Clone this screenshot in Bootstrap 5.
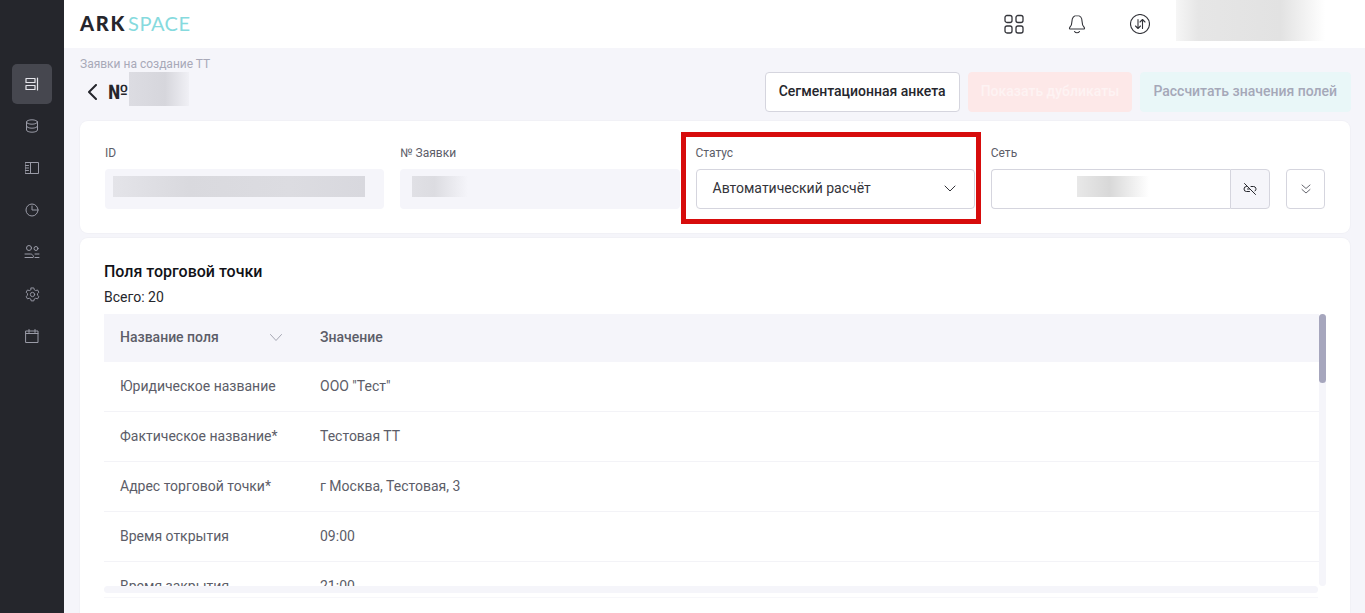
<!doctype html>
<html lang="ru">
<head>
<meta charset="utf-8">
<title>Заявки на создание ТТ</title>
<link rel="stylesheet" href="https://cdn.jsdelivr.net/npm/bootstrap@5.3.0/dist/css/bootstrap.min.css">
<style>
html,body{height:613px;overflow:hidden}
body{font-family:Roboto,"Liberation Sans",sans-serif;background:#f5f5fa;color:#25262c;font-size:14px}
svg{display:block;fill:none;stroke:currentColor;stroke-linecap:round;stroke-linejoin:round}
.app-rail{width:64px;background:#25262c;color:#9a9ba7;padding-top:64px;gap:2px;height:613px;flex:none}
.rail-item{width:40px;height:40px;border-radius:5px}
.rail-item.on{background:#46474f;color:#e6e6ec}
.app-top{height:48px;padding-left:16px;padding-right:40px;color:#33343a}
.logo-txt{font-family:Lato,sans-serif;font-size:20px;line-height:1;letter-spacing:1.7px;font-weight:900;color:#25262c;margin-top:-2px}
.logo-txt span{font-weight:400;color:#86dade;letter-spacing:.5px;margin-left:2px}
.top-ico{width:63px}
.blur-user{width:149px;height:41px;margin-top:-7px;margin-left:5px;overflow:hidden;background:linear-gradient(90deg,#f6f6f6,#e6e6e6 15%,#e2e2e2 70%,#fff)}
.crumb{font-size:12px;line-height:14px;color:#a8a9b8;padding-top:9px;margin-left:16px}
.title-row{padding-left:16px;padding-right:14px;height:50px;padding-top:1px}
.title-back{margin-top:12px}
.title-no{font-size:20px;font-weight:700;line-height:24px;margin-left:11px;margin-top:8px}
.title-mask{width:60px;height:34px;background:linear-gradient(90deg,#dcdce2,#d6d6dc 60%,#f0f0f5);margin-left:1px}
.act{height:40px;font-size:14px;font-weight:500;padding:0 13px;border-radius:4px;line-height:36px;white-space:nowrap}
.act-w{background:#fff;border:1px solid #d5d5de;color:#25262c}
.act-r{background:#fde8e8;color:#fdf3f3;border:1px solid #fde8e8;padding:0 12px}
.act-t{background:#e9f7f8;color:#a5a8b8;border:1px solid #e9f7f8;padding:0 13px 0 12px}
.panel{background:#fff;border-radius:8px;margin-left:16px;margin-right:15px;box-shadow:0 0 0 1px #f1f1f6}
.top-panel{height:112px;padding:24px 25px 0}
.f-grid{display:grid;grid-template-columns:repeat(4,1fr);gap:16px;flex:1}
.f-lab{font-size:12px;line-height:16px;color:#5c5d68;margin-bottom:8px}
.f-box{height:40px;border-radius:4px;position:relative;display:flow-root}
.f-ro{background:#f5f5fa}
.f-sel{border:1px solid #d5d5de;font-size:14px;padding:0 18px 2px 16px;color:#33343a;background:#fff}
.f-net{border:1px solid #d5d5de;background:#fff;height:40px;flex:1;border-radius:4px 0 0 4px;border-right:0;display:flow-root}
.f-unlink{width:40px;height:40px;background:#f5f5fa;border:1px solid #d5d5de;border-radius:0 4px 4px 0}
.f-more{width:39px;height:40px;border:1px solid #d5d5de;border-radius:4px;background:#fff;margin-left:16px;margin-top:24px;flex:none;color:#55565f}
.mask{height:21px;margin-top:7px}
.mask-a{margin-left:8px;margin-right:19px;background:linear-gradient(90deg,#e4e4e9,#d9d9de 30%,#dcdce1 70%,#d8d8de)}
.mask-b{margin-left:12px;width:56px;background:linear-gradient(90deg,#e0e0e5,#dcdce1 40%,#f5f5fa)}
.mask-c{margin-left:85px;width:72px;margin-top:6px;background:linear-gradient(90deg,#e8e8e8,#d8d8d8 45%,#fff)}
.hl-box{position:absolute;left:-16px;right:-7px;top:-38px;height:92px;border:5px solid #d70c0c;pointer-events:none}
.fields-panel{margin-top:5px;height:400px;padding:24px 24px 0}
.sec-title{font-size:16px;line-height:19px;font-weight:500;color:#111217}
.sec-count{font-size:14px;line-height:16px;margin-top:8px;margin-bottom:9px;color:#25262c}
.tbl-shell{width:1222px}
.tbl-view{height:272px;width:1215px;overflow:hidden;flex:none}
.track-v{width:7px;height:272px;background:#f5f5fa;border-radius:4px;flex:none}
.thumb-v{background:#a6a6bd;border-radius:4px}
.track-h{height:7px;width:1214px;background:#f5f5fa;border-radius:4px}
.tbl-foot{height:1px;width:1214px;margin-top:4px;background:#f7f7fa}
.tbl-head{height:48px;background:#f5f5fa;font-weight:500;color:#5c5d68;padding-bottom:2px}
.tbl-line{height:50px;border-bottom:1px solid #f3f3f7;color:#5c5d68;flex:none}
.c-name{width:216px;padding-left:16px;padding-right:38px;flex:none}
.sort-ico{color:#a5a6b2}
</style>
</head>
<body>
<div class="d-flex">
  <nav class="app-rail d-flex flex-column align-items-center">
    <div class="rail-item on d-flex align-items-center justify-content-center">
      <svg width="16" height="16" viewBox="0 0 16 16" stroke-width="1.200"><rect x="2" y="2.500" width="9" height="4"/><rect x="2" y="9.500" width="9" height="4"/><path d="M13.500 2v12"/></svg>
    </div>
    <div class="rail-item d-flex align-items-center justify-content-center">
      <svg width="14" height="14" viewBox="0 0 14 14" stroke-width="1"><ellipse cx="7" cy="3" rx="5.500" ry="2.200"/><path d="M1.500 3v8c0 1.200 2.500 2.200 5.500 2.200s5.500-1 5.500-2.200V3M1.500 7c0 1.200 2.500 2.200 5.500 2.200s5.500-1 5.500-2.200"/></svg>
    </div>
    <div class="rail-item d-flex align-items-center justify-content-center">
      <svg width="14" height="14" viewBox="0 0 14 14" stroke-width="1"><rect x=".5" y="1.500" width="13" height="11"/><path d="M5.500 1.500v11M.5 4.500h3M.5 7h3M.5 9.500h3"/></svg>
    </div>
    <div class="rail-item d-flex align-items-center justify-content-center">
      <svg width="14" height="14" viewBox="0 0 14 14" stroke-width="1"><circle cx="7" cy="7" r="6"/><path d="M7 3v4h4.500"/></svg>
    </div>
    <div class="rail-item d-flex align-items-center justify-content-center">
      <svg width="16" height="16" viewBox="0 0 16 16" stroke-width="1"><circle cx="5" cy="4" r="2.500"/><circle cx="12" cy="4.500" r="2"/><path d="M1 10h5.500c1.500 0 2.500 1 3 2.500M1 13.500h8M11 10h4M11 13.500h4"/></svg>
    </div>
    <div class="rail-item d-flex align-items-center justify-content-center">
      <svg width="15" height="15" viewBox="0 0 16 16" stroke-width="1"><circle cx="8" cy="8" r="2.300"/><path d="M6.600 1h2.800l.5 2 1.500.8 2-.6 1.400 2.400-1.500 1.400v1.800l1.500 1.400-1.400 2.400-2-.6-1.500.8-.5 2H6.600l-.5-2-1.500-.8-2 .6L1.200 10.200l1.500-1.400V7L1.200 5.600l1.400-2.400 2 .6 1.500-.8z"/></svg>
    </div>
    <div class="rail-item d-flex align-items-center justify-content-center">
      <svg width="14" height="14" viewBox="0 0 14 14" stroke-width="1"><rect x="1" y="2" width="12" height="11.500"/><path d="M1 4.500h12M4 .5v3M10 .5v3"/></svg>
    </div>
  </nav>
  <main class="flex-grow-1">
    <header class="app-top bg-white d-flex align-items-center">
      <div class="logo-txt">ARK<span>SPACE</span></div>
      <div class="ms-auto d-flex align-items-center">
        <div class="top-ico d-flex justify-content-center">
          <svg width="20" height="20" viewBox="0 0 20 20" stroke-width="1.300"><rect x="1" y="1.500" width="7" height="7" rx="2"/><rect x="12" y="1.500" width="7" height="7" rx="2"/><rect x="1" y="12" width="7" height="7" rx="2"/><rect x="12" y="12" width="7" height="7" rx="2"/></svg>
        </div>
        <div class="top-ico d-flex justify-content-center">
          <svg width="20" height="20" viewBox="0 0 20 20" stroke-width="1.100"><path d="M10 1.500c-3.300 0-5 2.500-5 5.500 0 3-.8 5-2.300 6.500-.5.600-.2 1.500.7 1.500h13.200c.9 0 1.200-.9.700-1.500C15.800 12 15 10 15 7c0-3-1.700-5.500-5-5.500zM7.500 17.500c.7 1 1.500 1.300 2.500 1.300s1.800-.3 2.500-1.300"/></svg>
        </div>
        <div class="top-ico d-flex justify-content-center">
          <svg width="20" height="20" viewBox="0 0 20 20" stroke-width="1.100"><circle cx="10" cy="10" r="9.500"/><path d="M8 5.500v9M5.500 12l2.500 2.500L10.500 12M12.500 14.500v-9M10 8l2.500-2.500L15 8"/></svg>
        </div>
        <div class="blur-user"></div>
      </div>
    </header>
    <div class="crumb">Заявки на создание ТТ</div>
    <div class="title-row d-flex align-items-start">
      <div class="d-flex align-items-start">
        <svg class="ms-2 title-back" width="9" height="16" viewBox="0 0 9 16" stroke-width="2"><path d="M8 1 1 8l7 7"/></svg>
        <span class="title-no">№</span><div class="title-mask"></div>
      </div>
      <div class="ms-auto d-flex gap-2">
        <div class="act act-w">Сегментационная анкета</div>
        <div class="act act-r">Показать дубликаты</div>
        <div class="act act-t">Рассчитать значения полей</div>
      </div>
    </div>
    <section class="panel top-panel d-flex align-items-start">
      <div class="f-grid">
        <div><div class="f-lab">ID</div><div class="f-box f-ro"><div class="mask mask-a"></div></div></div>
        <div><div class="f-lab">№ Заявки</div><div class="f-box f-ro"><div class="mask mask-b"></div></div></div>
        <div><div class="f-lab">Статус</div>
          <div class="f-box f-sel d-flex align-items-center justify-content-between">
            <span>Автоматический расчёт</span>
            <svg width="12" height="7" viewBox="0 0 12 7" stroke-width="1"><path d="m1 1 5 5 5-5"/></svg>
            <div class="hl-box"></div>
          </div>
        </div>
        <div><div class="f-lab">Сеть</div>
          <div class="d-flex">
            <div class="f-net"><div class="mask mask-c"></div></div>
            <div class="f-unlink d-flex align-items-center justify-content-center">
              <svg width="14" height="14" viewBox="0 0 14 14" stroke-width="1"><path d="M1.500 1.500l11 11M4 4.500H3.500a2.500 2.500 0 0 0 0 5h3M8 4.500h2.500a2.500 2.500 0 0 1 1.500 4.500M4.500 7h2"/></svg>
            </div>
          </div>
        </div>
      </div>
      <div class="f-more d-flex align-items-center justify-content-center">
        <svg width="10" height="10" viewBox="0 0 10 10" stroke-width=".9"><path d="m1 1 4 3.500L9 1M1 5.500 5 9l4-3.500"/></svg>
      </div>
    </section>
    <section class="panel fields-panel">
      <div class="sec-title">Поля торговой точки</div>
      <div class="sec-count">Всего: 20</div>
      <div class="tbl-shell">
        <div class="d-flex">
          <div class="tbl-view">
            <div class="tbl-head d-flex align-items-center">
              <div class="c-name d-flex align-items-center justify-content-between"><span>Название поля</span>
                <svg class="sort-ico" width="12" height="7" viewBox="0 0 12 7" stroke-width="1"><path d="m.5.500 5.500 6 5.500-6"/></svg></div>
              <div>Значение</div>
            </div>
            <div class="tbl-line d-flex align-items-center"><div class="c-name">Юридическое название</div><div>ООО "Тест"</div></div>
            <div class="tbl-line d-flex align-items-center"><div class="c-name">Фактическое название*</div><div>Тестовая ТТ</div></div>
            <div class="tbl-line d-flex align-items-center"><div class="c-name">Адрес торговой точки*</div><div>г Москва, Тестовая, 3</div></div>
            <div class="tbl-line d-flex align-items-center"><div class="c-name">Время открытия</div><div>09:00</div></div>
            <div class="tbl-line d-flex align-items-center"><div class="c-name">Время закрытия</div><div>21:00</div></div>
          </div>
          <div class="track-v"><div class="thumb-v" style="height:69px"></div></div>
        </div>
        <div class="track-h"></div>
        <div class="tbl-foot"></div>
      </div>
    </section>
  </main>
</div>
<script src="https://cdn.jsdelivr.net/npm/bootstrap@5.3.0/dist/js/bootstrap.bundle.min.js"></script>
</body>
</html>
